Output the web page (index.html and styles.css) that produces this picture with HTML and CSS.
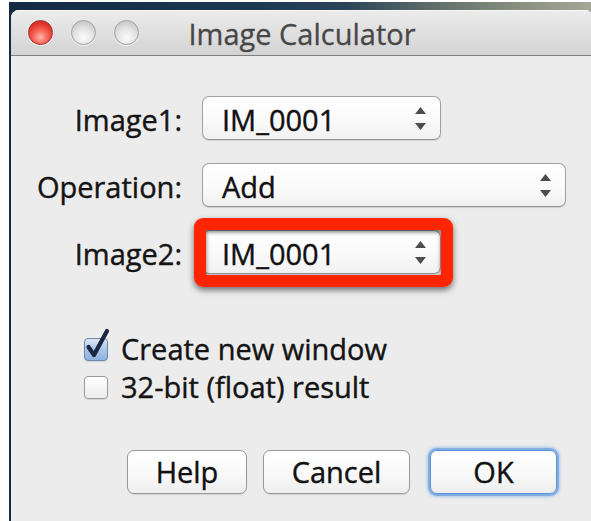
FILE: index.html
```html
<!DOCTYPE html>
<html lang="en">
<head>
<meta charset="utf-8">
<title>Image Calculator</title>
<link rel="stylesheet" href="styles.css">
</head>
<body>
<div class="desktop">
  <div class="window">
    <div class="titlebar">
      <div class="lights">
        <span class="light light-close"></span>
        <span class="light"></span>
        <span class="light"></span>
      </div>
      <div class="title">Image Calculator</div>
    </div>

    <div class="content">
      <div class="form">
        <label class="label">Image1:</label>
        <div class="popup popup-short">
          <span class="popup-text">IM_0001</span>
          <svg class="stepper" width="11" height="23" viewBox="0 0 11 23"><polygon points="5.5,0 11,7 0,7"/><polygon points="0,16 11,16 5.5,23"/></svg>
        </div>

        <label class="label">Operation:</label>
        <div class="popup popup-wide">
          <span class="popup-text">Add</span>
          <svg class="stepper" width="11" height="23" viewBox="0 0 11 23"><polygon points="5.5,0 11,7 0,7"/><polygon points="0,16 11,16 5.5,23"/></svg>
        </div>

        <label class="label">Image2:</label>
        <div class="popup popup-short popup-marked">
          <span class="popup-text">IM_0001</span>
          <svg class="stepper" width="11" height="23" viewBox="0 0 11 23"><polygon points="5.5,0 11,7 0,7"/><polygon points="0,16 11,16 5.5,23"/></svg>
          <span class="highlight"></span>
        </div>
      </div>

      <div class="checks">
        <div class="check-row">
          <span class="box box-checked">
            <svg class="tick" width="26" height="34" viewBox="0 0 26 34"><path d="M4.5 19 L10 27 L23 3"/></svg>
          </span>
          <span class="check-label">Create new window</span>
        </div>
        <div class="check-row">
          <span class="box"></span>
          <span class="check-label">32-bit (float) result</span>
        </div>
      </div>

      <div class="buttons">
        <button class="btn btn-help">Help</button>
        <button class="btn btn-cancel">Cancel</button>
        <button class="btn btn-ok">OK</button>
      </div>
    </div>
  </div>
</div>
</body>
</html>
```

FILE: styles.css
```css
html, body {
  margin: 0;
  padding: 0;
  width: 591px;
  height: 521px;
  overflow: hidden;
  background: #ffffff;
}

body {
  padding: 2px 0 0 9px;
  box-sizing: border-box;
  font-family: "Open Sans", "DejaVu Sans", sans-serif;
}

/* wallpaper strip behind the dialog */
.desktop {
  box-sizing: border-box;
  padding: 8px 0 0 2px;
  height: 519px;
  background: linear-gradient(90deg, #132b42 0%, #1b3851 40%, #2a4459 58%, #5c6b68 72%, #8a9081 88%, #a6a796 100%);
}

.window {
  width: 582px;
  height: 511px;
  background: #ececec;
  border-top-left-radius: 8px;
  border-top-right-radius: 8px;
  overflow: hidden;
}

/* title bar */
.titlebar {
  display: grid;
  height: 45px;
  background: linear-gradient(#ececec 0%, #e2e2e2 40%, #d3d3d3 100%);
  border-bottom: 1px solid #7f7f7f;
  box-shadow: inset 0 1px 0 #f7f7f7;
}

.lights,
.title {
  grid-area: 1 / 1;
}

.lights {
  display: flex;
  align-items: center;
  gap: 18px;
  padding-left: 17px;
}

.light {
  width: 25px;
  height: 25px;
  box-sizing: border-box;
  border-radius: 50%;
  border: 1px solid #a3a3a3;
  background: radial-gradient(circle at 50% 72%, #fbfbfb 0%, #e4e4e4 45%, #c9c9c9 80%, #b4b4b4 100%);
  box-shadow: 0 1px 1px rgba(255, 255, 255, 0.7);
}

.light-close {
  border-color: #a8302a;
  background: radial-gradient(circle at 50% 70%, #ffb9ac 0%, #f7675a 35%, #e2372c 65%, #b9231b 100%);
}

.title {
  justify-self: center;
  align-self: center;
  padding-top: 1px;
  font-size: 29px;
  line-height: 29px;
  color: #474747;
  -webkit-text-stroke: 0.3px #474747;
}

/* dialog body */
.content {
  padding-top: 40px;
}

.form {
  display: grid;
  grid-template-columns: 171px auto;
  grid-auto-rows: 44px;
  column-gap: 20px;
  row-gap: 23px;
  justify-items: start;
}

.label {
  justify-self: end;
  align-self: center;
  padding-top: 3px;
  font-size: 29px;
  line-height: 29px;
  color: #141414;
  -webkit-text-stroke: 0.4px #141414;
}

.popup {
  position: relative;
  display: flex;
  align-items: center;
  justify-content: space-between;
  height: 44px;
  box-sizing: border-box;
  padding: 3px 14px 0 19px;
  border: 1px solid #a2a2a2;
  border-bottom-color: #939393;
  border-radius: 7px;
  background: linear-gradient(#ffffff 0%, #fbfbfb 50%, #f1f1f1 100%);
  box-shadow: 0 1px 1px rgba(0, 0, 0, 0.12);
}

.popup-short { width: 239px; }
.popup-wide { width: 364px; }

.popup-text {
  font-size: 29px;
  line-height: 29px;
  color: #111111;
  -webkit-text-stroke: 0.4px #111111;
}

.stepper {
  margin-top: -3px;
  fill: #4d4d4d;
}

/* red annotation frame around the second image selector */
.highlight {
  position: absolute;
  left: -9px;
  top: -13px;
  width: 259px;
  height: 69px;
  box-sizing: border-box;
  border: 12px solid #ff2500;
  border-radius: 9px;
  box-shadow: 0 3px 6px rgba(0, 0, 0, 0.55), inset 0 2px 4px rgba(0, 0, 0, 0.55);
}

/* checkboxes */
.checks {
  margin: 56px 0 0 73px;
}

.check-row {
  display: flex;
  align-items: center;
  gap: 13px;
  height: 38px;
}

.box {
  position: relative;
  width: 24px;
  height: 23px;
  box-sizing: border-box;
  border: 1px solid #9a9a9a;
  border-radius: 4px;
  background: linear-gradient(#ffffff, #ececec);
  box-shadow: 0 1px 1px rgba(0, 0, 0, 0.1);
}

.box-checked {
  border-color: #6c86aa;
  background: linear-gradient(#dce8f6 0%, #aac5e8 50%, #8fb1de 100%);
}

.tick {
  position: absolute;
  left: -1px;
  top: -11px;
  overflow: visible;
}

.tick path {
  fill: none;
  stroke: #1b2741;
  stroke-width: 4.2;
  stroke-linecap: round;
  stroke-linejoin: round;
}

.check-label {
  font-size: 29px;
  line-height: 38px;
  color: #141414;
  -webkit-text-stroke: 0.4px #141414;
}

/* push buttons */
.buttons {
  display: flex;
  gap: 16px;
  margin: 44px 0 0 116px;
}

.btn {
  height: 44px;
  box-sizing: border-box;
  padding: 0 0 2px;
  border: 1px solid #9a9a9a;
  border-radius: 7px;
  background: linear-gradient(#ffffff 0%, #fafafa 50%, #eeeeee 100%);
  box-shadow: 0 1px 1px rgba(0, 0, 0, 0.12);
  font-family: "Open Sans", "DejaVu Sans", sans-serif;
  font-size: 29px;
  line-height: 29px;
  color: #111111;
  -webkit-text-stroke: 0.4px #111111;
}

.btn-help { width: 120px; }
.btn-cancel { width: 147px; }

.btn-ok {
  width: 127px;
  margin-left: 4px;
  border-color: #5d90cf;
  box-shadow: 0 0 0 2px #80afe3, 0 0 3px 3px rgba(110, 165, 230, 0.55);
}
```
